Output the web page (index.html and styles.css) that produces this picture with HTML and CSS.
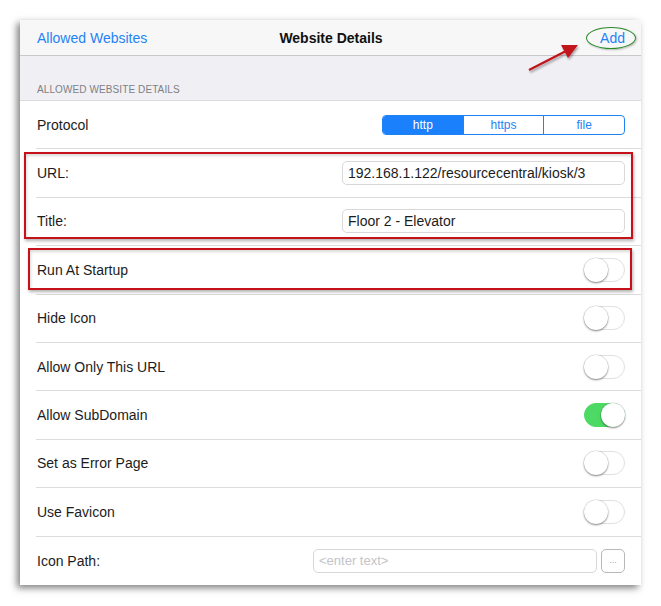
FILE: index.html
```html
<!DOCTYPE html>
<html lang="en">
<head>
    <meta charset="UTF-8">
    <title>Website Details</title>
    <link rel="stylesheet" href="styles.css">
</head>
<body>
    <div class="frame">
        <div class="navbar">
            <span class="nav-back">Allowed Websites</span>
            <span class="nav-title">Website Details</span>
            <span class="nav-add">Add</span>
        </div>
        <div class="section-header">ALLOWED WEBSITE DETAILS</div>
        <div class="list">
            <div class="row">
                <div class="row-inner">
                    <span class="label">Protocol</span>
                    <div class="segmented">
                        <span class="seg active">http</span>
                        <span class="seg">https</span>
                        <span class="seg">file</span>
                    </div>
                </div>
            </div>
            <div class="row">
                <div class="row-inner">
                    <span class="label">URL:</span>
                    <div class="field wide">192.168.1.122/resourcecentral/kiosk/3</div>
                </div>
            </div>
            <div class="row">
                <div class="row-inner">
                    <span class="label">Title:</span>
                    <div class="field wide">Floor 2 - Elevator</div>
                </div>
            </div>
            <div class="row">
                <div class="row-inner">
                    <span class="label">Run At Startup</span>
                    <span class="toggle"></span>
                </div>
            </div>
            <div class="row">
                <div class="row-inner">
                    <span class="label">Hide Icon</span>
                    <span class="toggle"></span>
                </div>
            </div>
            <div class="row">
                <div class="row-inner">
                    <span class="label">Allow Only This URL</span>
                    <span class="toggle"></span>
                </div>
            </div>
            <div class="row">
                <div class="row-inner">
                    <span class="label">Allow SubDomain</span>
                    <span class="toggle on"></span>
                </div>
            </div>
            <div class="row">
                <div class="row-inner">
                    <span class="label">Set as Error Page</span>
                    <span class="toggle"></span>
                </div>
            </div>
            <div class="row">
                <div class="row-inner">
                    <span class="label">Use Favicon</span>
                    <span class="toggle"></span>
                </div>
            </div>
            <div class="row last">
                <div class="row-inner">
                    <span class="label">Icon Path:</span>
                    <div class="path-group">
                        <div class="field path placeholder">&lt;enter text&gt;</div>
                        <div class="dots-btn">...</div>
                    </div>
                </div>
            </div>
        </div>

        <!-- annotations -->
        <div class="mark mark-url"></div>
        <div class="mark mark-run"></div>
        <div class="ring"></div>
        <svg class="arrow" width="70" height="44" viewBox="0 0 70 44">
            <defs>
                <filter id="sh" x="-20%" y="-20%" width="140%" height="160%">
                    <feDropShadow dx="1" dy="2" stdDeviation="1" flood-color="#000" flood-opacity="0.35"/>
                </filter>
            </defs>
            <g filter="url(#sh)">
                <line x1="9" y1="30" x2="46" y2="11" stroke="#c0141c" stroke-width="2.2"/>
                <polygon points="58,5 41,5 48,18" fill="#c0141c"/>
            </g>
        </svg>
    </div>
</body>
</html>
```

FILE: styles.css
```css
body {
    margin: 0;
    padding: 20px;
    background: #fff;
    font-family: "Liberation Sans", Arial, sans-serif;
    color: #1c1c1c;
}
.frame {
    position: relative;
    width: 621px;
    height: 565px;
    background: #fff;
    box-shadow: -3px 3px 7px rgba(0, 0, 0, 0.5);
}
.navbar {
    height: 36px;
    background: #f7f7f8;
    border-bottom: 1px solid #c9c9cc;
    box-sizing: border-box;
    display: grid;
    grid-template-columns: 1fr auto 1fr;
    align-items: center;
    padding: 0 16px 0 17px;
    font-size: 14px;
}
.nav-back, .nav-add {
    color: #1f83f4;
}
.nav-add {
    justify-self: end;
}
.nav-title {
    font-weight: bold;
    color: #111;
}
.section-header {
    height: 45px;
    background: #efeff4;
    border-bottom: 1px solid #dcdce0;
    box-sizing: border-box;
    display: flex;
    align-items: flex-end;
    padding: 0 0 5px 17px;
    font-size: 10px;
    color: #808086;
    letter-spacing: 0.1px;
}
.row {
    height: 48.4px;
    padding-left: 16px;
    box-sizing: border-box;
}
.row-inner {
    height: 100%;
    display: flex;
    align-items: center;
    justify-content: space-between;
    padding: 0 16px 0 1px;
    border-bottom: 1px solid #dcdcdc;
    box-sizing: border-box;
    font-size: 14px;
}
.row.last .row-inner {
    border-bottom: none;
}
.segmented {
    display: flex;
    width: 243px;
    height: 20px;
    border: 1px solid #1f83f4;
    border-radius: 4px;
    box-sizing: border-box;
    overflow: hidden;
}
.seg {
    flex: 1;
    display: flex;
    align-items: center;
    justify-content: center;
    font-size: 12px;
    color: #1f83f4;
    border-left: 1px solid #1f83f4;
}
.seg:first-child {
    border-left: none;
}
.seg.active {
    background: #1a80fb;
    color: #fff;
}
.field {
    height: 24px;
    border: 1px solid #d8d8d8;
    border-radius: 5px;
    box-sizing: border-box;
    display: flex;
    align-items: center;
    padding-left: 5px;
    font-size: 14px;
    color: #1c1c1c;
}
.field.wide {
    width: 283px;
}
.path-group {
    display: flex;
    gap: 4px;
}
.field.path {
    width: 284px;
}
.placeholder {
    color: #c4c4c8;
    font-size: 13px;
}
.dots-btn {
    width: 24px;
    height: 24px;
    border: 1px solid #b8b8bc;
    border-radius: 5px;
    box-sizing: border-box;
    font-size: 9px;
    color: #a0a0a4;
    display: flex;
    align-items: center;
    justify-content: center;
    padding-bottom: 2px;
}
.toggle {
    position: relative;
    width: 41px;
    height: 24px;
    border: 1px solid #e0e0e0;
    border-radius: 12px;
    box-sizing: border-box;
    background: #fff;
}
.toggle::after {
    content: "";
    position: absolute;
    left: -1px;
    top: -1px;
    width: 24px;
    height: 24px;
    border-radius: 50%;
    background: #fff;
    box-shadow: 0 1px 2px rgba(0, 0, 0, 0.45), 0 0 0 0.5px rgba(0, 0, 0, 0.12);
}
.toggle.on {
    background: #4cd964;
    border-color: #4cd964;
}
.toggle.on::after {
    left: auto;
    right: -1px;
}
.mark {
    position: absolute;
    border: 2px solid #c4111a;
    box-shadow: 1px 2px 3px rgba(0, 0, 0, 0.3), inset 1px 2px 3px rgba(0, 0, 0, 0.15);
}
.mark-url {
    left: 4px;
    top: 132px;
    width: 605px;
    height: 83px;
}
.mark-run {
    left: 8px;
    top: 228px;
    width: 600px;
    height: 38px;
}
.ring {
    position: absolute;
    left: 566px;
    top: 7px;
    width: 48px;
    height: 20px;
    border: 1.5px solid #2a8a2a;
    border-radius: 50%;
    box-shadow: 1px 1px 2px rgba(0, 0, 0, 0.25);
}
.arrow {
    position: absolute;
    left: 500px;
    top: 20px;
}
```
